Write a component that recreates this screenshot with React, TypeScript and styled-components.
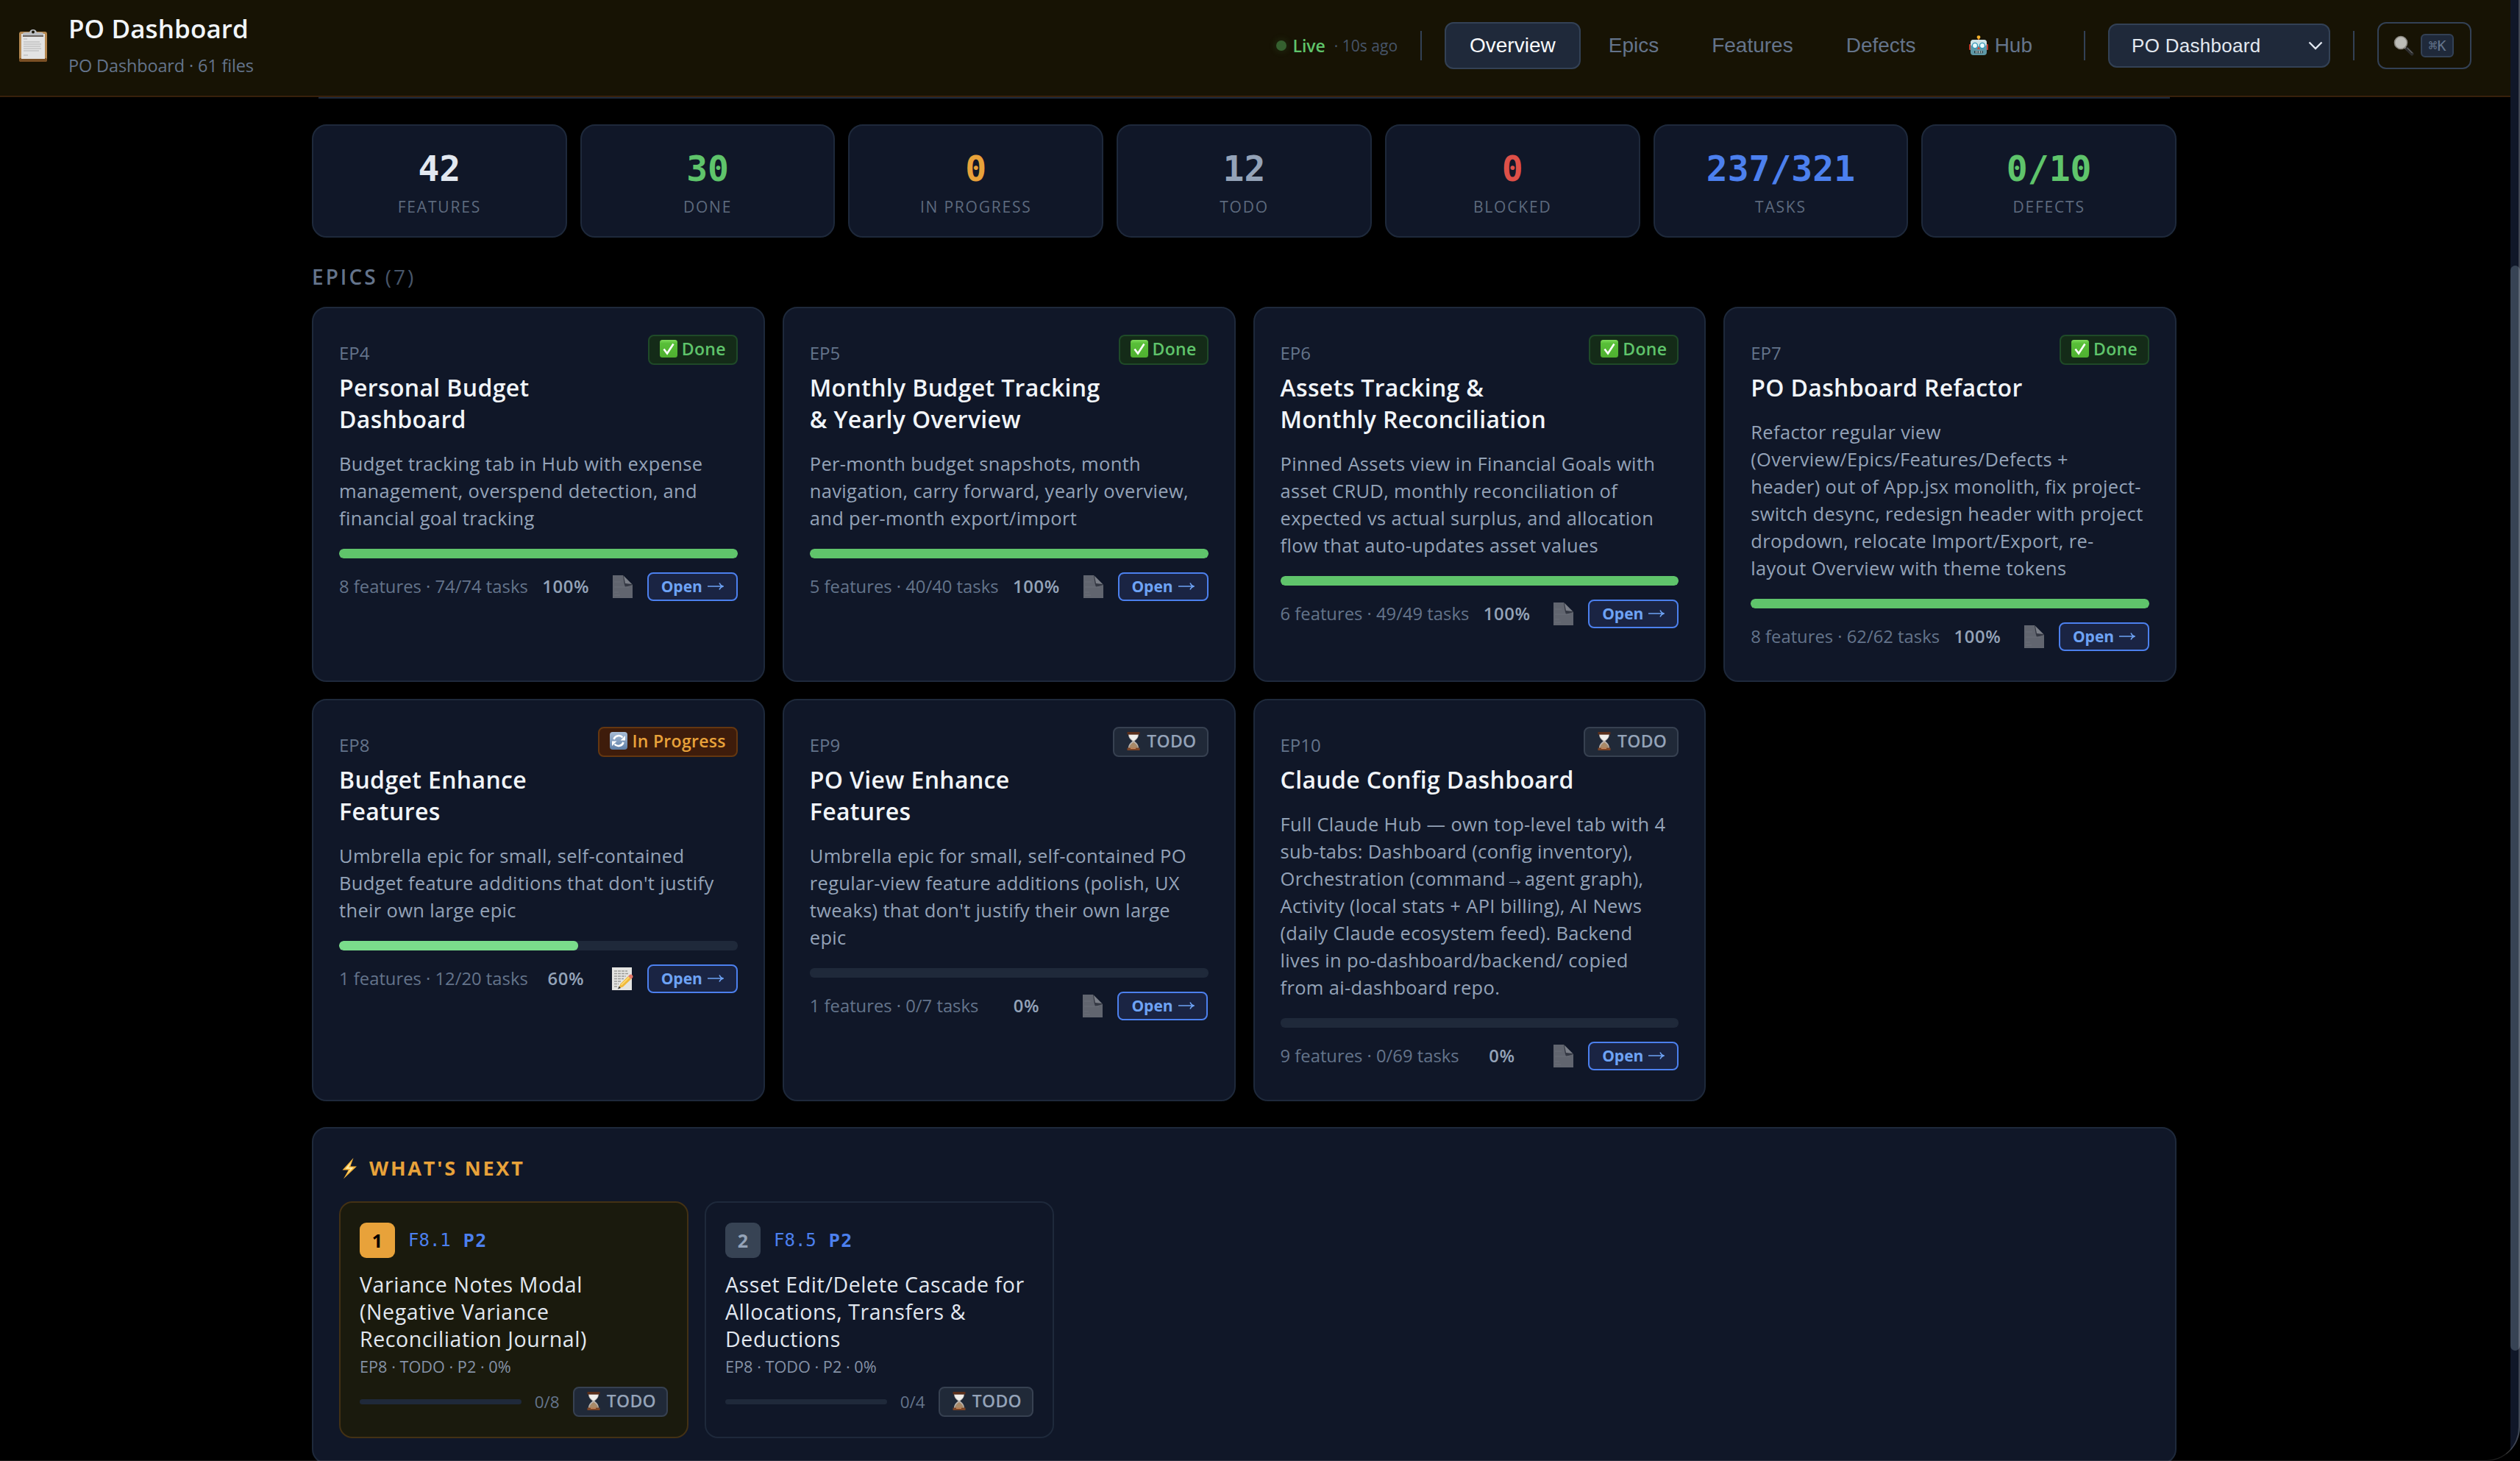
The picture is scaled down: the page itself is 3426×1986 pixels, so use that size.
import React from 'react';
import styled, { createGlobalStyle, css } from 'styled-components';

const GlobalStyle = createGlobalStyle`
  * {
    box-sizing: border-box;
  }
  html, body {
    margin: 0;
    background: #000;
  }
  body {
    font-family: 'Open Sans', 'Noto Sans', sans-serif;
    color: #f1f5f9;
    overflow: hidden;
  }
`

const MONO = `'DejaVu Sans Mono', 'Liberation Mono', monospace`;
const UI = `'Liberation Sans', Arial, sans-serif`;

const Page = styled.div`
  display: flex;
  height: 1986px;
  overflow: hidden;
  position: relative;
`
const Main = styled.main`
  flex: 1;
  min-width: 0;
`
const Track = styled.div`
  width: 13px;
  padding-top: 361px;
  background: #101728;
`
const Thumb = styled.div`
  height: 1475px;
  border-radius: 7px;
  background: #374354;
`
// thin outline of the window, drawn over the page corner
const WindowEdge = styled.div`
  position: absolute;
  inset: 0;
  pointer-events: none;
  border-right: 2px solid rgba(255, 255, 255, 0.2);
  border-bottom: 1px solid rgba(255, 255, 255, 0.12);
  border-bottom-right-radius: 46px;
  box-shadow: 0 0 0 40px #000;
`

const Header = styled.header`
  display: flex;
  align-items: center;
  justify-content: space-between;
  height: 132px;
  padding: 0 53px 6px 22px;
  background: #171304;
  border-bottom: 2px solid #38200b;
`
const Brand = styled.div`
  display: flex;
  align-items: center;
  gap: 25px;
`
const BrandTitle = styled.div`
  font-size: 35px;
  font-weight: 600;
  line-height: 44px;
  letter-spacing: 0.1px;
  white-space: nowrap;
`
const BrandSub = styled.div`
  margin-top: 10px;
  font-size: 23.5px;
  line-height: 36px;
  letter-spacing: -0.15px;
  color: #64748b;
  white-space: nowrap;
`
const Tools = styled.div`
  display: flex;
  align-items: center;
  gap: 31px;
`
const Live = styled.div`
  display: flex;
  align-items: center;
  font-size: 23px;
  font-weight: 600;
  color: #5fc46b;
  white-space: nowrap;
`
const LiveDot = styled.span`
  width: 14px;
  height: 14px;
  margin-right: 8px;
  border-radius: 50%;
  background: #35602f;
  box-shadow: 0 0 12px rgba(95, 196, 107, 0.2);
`
const Ago = styled.span`
  margin-left: 12px;
  font-size: 21px;
  font-weight: 400;
  color: #475569;
`
const Divider = styled.div`
  width: 2px;
  height: 40px;
  background: #334155;
`
const Nav = styled.nav`
  display: flex;
  gap: 4px;
  padding-right: 5px;
`
const Tab = styled.button<{ $active?: boolean }>`
  display: flex;
  align-items: center;
  gap: 9px;
  height: 64px;
  padding: 0 32px;
  border: 2px solid ${p => (p.$active ? '#334155' : 'transparent')};
  border-radius: 12px;
  background: ${p => (p.$active ? '#1f293a' : 'transparent')};
  color: ${p => (p.$active ? '#f8fafc' : '#64748b')};
  font-family: ${UI};
  font-size: 28px;
  white-space: nowrap;
`
const ProjectSelect = styled.div`
  display: flex;
  align-items: center;
  justify-content: space-between;
  width: 302px;
  height: 60px;
  padding: 0 8px 0 30px;
  border: 2px solid #334155;
  border-radius: 12px;
  background: #1f293a;
  color: #e2e8f0;
  font-family: ${UI};
  font-size: 26px;
  letter-spacing: 0.3px;
`
const SearchButton = styled.button`
  display: flex;
  align-items: center;
  gap: 9px;
  width: 128px;
  height: 64px;
  padding: 0 0 0 20px;
  border: 2px solid #334155;
  border-radius: 12px;
  background: transparent;
`
const Kbd = styled.kbd`
  display: flex;
  align-items: center;
  justify-content: center;
  width: 45px;
  height: 32px;
  border: 2px solid #334155;
  border-radius: 6px;
  background: #1f293a;
  color: #64748b;
  font-family: ${MONO};
  font-size: 20px;
`

const Content = styled.div`
  width: 2959px;
  padding-left: 424px;
`
// bottom edge of the card that has scrolled under the header
const ScrolledCard = styled.div`
  height: 2px;
  margin: 0 9px 35px;
  background: #1e293b;
`

const Stats = styled.div`
  display: grid;
  grid-template-columns: repeat(7, 1fr);
  gap: 18px;
`
const panel = css`
  background: #101728;
  border: 2px solid #1e293b;
  border-radius: 20px;
`
const Stat = styled.div`
  ${panel}
  height: 154px;
  padding-top: 30px;
  text-align: center;
`
const StatValue = styled.div<{ $color: string }>`
  font-family: ${MONO};
  font-size: 48px;
  font-weight: 700;
  line-height: 56px;
  color: ${p => p.$color};
`
const StatLabel = styled.div`
  margin-top: 9px;
  font-size: 21px;
  line-height: 30px;
  letter-spacing: 1.8px;
  color: #5d6a7e;
`

const SectionTitle = styled.h2`
  margin: 34px 0 22px;
  font-size: 28px;
  font-weight: 600;
  line-height: 38px;
  letter-spacing: 3px;
  color: #64748b;

  span {
    font-weight: 400;
    color: #475569;
  }
`

const EpicGrid = styled.div`
  display: grid;
  grid-template-columns: repeat(4, 1fr);
  gap: 23px 24px;
`
const EpicCard = styled.article`
  ${panel}
  padding: 36px 35px;
`
const EpicTop = styled.div`
  display: flex;
  align-items: flex-start;
  justify-content: space-between;
`
const EpicId = styled.div`
  padding-top: 7px;
  font-size: 24px;
  line-height: 36px;
  color: #64748b;
`
const EpicName = styled.h3`
  width: 0;
  margin: 7px 0 0;
  font-size: 32px;
  font-weight: 600;
  line-height: 43px;
  letter-spacing: 0.35px;
  white-space: pre;
`
const EpicText = styled.p`
  margin: 21px 0 23px;
  font-size: 25.5px;
  line-height: 37px;
  letter-spacing: 0.33px;
  color: #94a3b8;
  white-space: pre;
`
const Bar = styled.div<{ $thin?: boolean }>`
  flex: ${p => (p.$thin ? 1 : 'none')};
  height: ${p => (p.$thin ? 7 : 13)}px;
  border-radius: 6px;
  background: #1f293a;
  overflow: hidden;
`
const BarFill = styled.div<{ $full: boolean }>`
  height: 100%;
  border-radius: 6px;
  background: ${p => (p.$full ? '#5fc46b' : '#7adc8b')};
`
const EpicFoot = styled.div`
  display: flex;
  align-items: center;
  justify-content: space-between;
  height: 48px;
  margin-top: 14px;
  font-size: 23.8px;
  color: #64748b;
  white-space: nowrap;

  b {
    font-weight: 600;
    letter-spacing: 0.6px;
    color: #94a3b8;
  }
`
const Actions = styled.div`
  display: flex;
  align-items: center;
  gap: 8px;
`
const NoteButton = styled.button`
  display: flex;
  align-items: center;
  justify-content: center;
  width: 51px;
  height: 48px;
  padding: 0;
  border: 0;
  background: transparent;
`
const OpenButton = styled.button`
  display: flex;
  align-items: center;
  justify-content: center;
  gap: 7px;
  width: 123px;
  height: 39px;
  padding: 0 0 1px;
  border: 2px solid #4c80ee;
  border-radius: 8px;
  background: #1a2443;
  color: #6ea3f5;
  font-family: 'Open Sans', sans-serif;
  font-size: 21px;
  font-weight: 700;
`

type Status = 'done' | 'progress' | 'todo';

const badgeColors = {
  done: ['#142b18', '#1f4a28', '#5fc46b'],
  progress: ['#3e1c0b', '#653710', '#e8a23a'],
  todo: ['#202938', '#374151', '#94a3b8'],
};

const BadgeBox = styled.span<{ $status: Status }>`
  display: flex;
  flex: none;
  align-items: center;
  gap: 6px;
  height: 41px;
  padding: 0 14px 3px;
  border: 2px solid ${p => badgeColors[p.$status][1]};
  border-radius: 8px;
  background: ${p => badgeColors[p.$status][0]};
  color: ${p => badgeColors[p.$status][2]};
  font-size: 23px;
  font-weight: 600;
  letter-spacing: 0.3px;
  white-space: nowrap;
`

const NextPanel = styled.section`
  ${panel}
  margin-top: 35px;
  padding: 35px 35px 33px;
`
const NextTitle = styled.h2`
  display: flex;
  align-items: center;
  gap: 13px;
  margin: 0 0 26px;
  font-size: 27px;
  font-weight: 700;
  line-height: 38px;
  letter-spacing: 2.8px;
  color: #e8a23a;
`
const NextList = styled.div`
  display: flex;
  gap: 22px;
`
const NextCard = styled.article<{ $first: boolean }>`
  width: 475px;
  padding: 27px 26px;
  border: 2px solid ${p => (p.$first ? '#433114' : '#1e293b')};
  border-radius: 18px;
  background: ${p => (p.$first ? '#1a1a0d' : 'transparent')};
`
const NextHead = styled.div`
  display: flex;
  align-items: center;
  font-family: ${MONO};
  font-size: 24px;
  color: #4c80ee;

  b {
    margin-left: 17px;
    font-size: 25px;
    letter-spacing: 1.5px;
  }
`
const Rank = styled.span<{ $first: boolean }>`
  display: flex;
  align-items: center;
  justify-content: center;
  width: 48px;
  height: 48px;
  margin-right: 18px;
  border-radius: 9px;
  background: ${p => (p.$first ? '#e8a23a' : '#374354')};
  color: ${p => (p.$first ? '#000' : '#94a3b8')};
  font-family: 'Open Sans', sans-serif;
  font-size: 25px;
  font-weight: 700;
`
const NextName = styled.h3`
  margin: 18px 0 0;
  font-size: 28.5px;
  font-weight: 500;
  line-height: 37px;
  letter-spacing: 0.6px;
  color: #e2e8f0;
  white-space: pre;
`
const NextMeta = styled.div`
  margin-top: 4px;
  font-size: 21.7px;
  line-height: 30px;
  color: #8592a6;
`
const NextFoot = styled.div`
  display: flex;
  align-items: center;
  gap: 18px;
  margin-top: 12px;
  font-size: 22.5px;
  color: #64748b;
`

const ClipboardIcon = () => (
  <svg width="46" height="46" viewBox="0 0 46 46">
    <rect x="4" y="4" width="38" height="41" rx="3" fill="#b58850" />
    <rect x="4" y="40" width="38" height="5" rx="2" fill="#7a4f24" />
    <rect x="7" y="7" width="32" height="34" fill="#e3e3e3" />
    <path d="M10 14h5M10 18h22M10 21h24M10 24h23M10 27h24M10 30h21M10 36h6" stroke="#c4c4c4" strokeWidth="1.6" />
    <path d="M9 10V7q0-2 3-2h6q1-4 5-4t5 4h6q3 0 3 2v3z" fill="#b9bcc0" />
    <path d="M9 9h28v2H9z" fill="#6b6460" />
    <circle cx="23" cy="4.5" r="2" fill="#171304" />
  </svg>
);

const RobotIcon = () => (
  <svg width="26" height="28" viewBox="0 0 26 28">
    <path d="M12 3h2v5h-2z" fill="#b35a1f" />
    <circle cx="13" cy="2.6" r="2.4" fill="#f5b32c" />
    <rect x="0" y="12" width="3" height="8" rx="1" fill="#c0392b" />
    <rect x="23" y="12" width="3" height="8" rx="1" fill="#c0392b" />
    <rect x="2" y="6" width="22" height="21" rx="4" fill="#5e98a6" />
    <rect x="2" y="6" width="22" height="9" rx="4" fill="#cfe3e6" />
    <circle cx="8" cy="14" r="3.6" fill="#e9fbff" stroke="#3497b5" strokeWidth="1.4" />
    <circle cx="18" cy="14" r="3.6" fill="#e9fbff" stroke="#3497b5" strokeWidth="1.4" />
    <path d="M13 15l2 4h-4z" fill="#d4493a" />
    <rect x="7" y="21" width="12" height="3.4" rx="1" fill="#24434b" />
    <path d="M9.5 21v3.4M12 21v3.4M14.5 21v3.4M17 21v3.4" stroke="#dfe9ea" strokeWidth="1" />
  </svg>
);

const SearchIcon = () => (
  <svg width="28" height="28" viewBox="0 0 28 28">
    <path d="M15 16l4 4" stroke="#8b8b8b" strokeWidth="3" />
    <path d="M18.5 18.5l6.500 6.500" stroke="#2b2b2b" strokeWidth="5" strokeLinecap="round" />
    <path d="M19 17.500l6.500 6.500" stroke="#8d8d8d" strokeWidth="1" strokeLinecap="round" />
    <circle cx="10" cy="10" r="8.500" fill="#bdbdb8" stroke="#8a8780" strokeWidth="1.600" />
  </svg>
);

const CheckIcon = () => (
  <svg width="24" height="24" viewBox="0 0 24 24">
    <defs>
      <linearGradient id="check" x1="0" y1="0" x2="0" y2="1">
        <stop offset="0" stopColor="#7fdc5b" />
        <stop offset="0.2" stopColor="#58bf38" />
        <stop offset="1" stopColor="#4fb030" />
      </linearGradient>
    </defs>
    <rect width="24" height="24" rx="3.500" fill="url(#check)" />
    <path d="M5.500 12.500l4.500 6 8.500-13" fill="none" stroke="#fff" strokeWidth="2.600" />
  </svg>
);

const RefreshIcon = () => (
  <svg width="24" height="24" viewBox="0 0 24 24">
    <defs>
      <linearGradient id="refresh" x1="0" y1="0" x2="0" y2="1">
        <stop offset="0" stopColor="#a9bdd6" />
        <stop offset="1" stopColor="#5e7ea6" />
      </linearGradient>
    </defs>
    <rect width="24" height="24" rx="4" fill="url(#refresh)" />
    <path d="M5.500 10a7 7 0 0 1 12-2.500M18.500 14a7 7 0 0 1-12 2.500" fill="none" stroke="#fff" strokeWidth="2.600" />
    <path d="M21 5v6.500h-6.500zM3 19v-6.500h6.500z" fill="#fff" />
  </svg>
);

const HourglassIcon = () => (
  <svg width="24" height="25" viewBox="0 0 24 25">
    <path d="M5 3h14c0 5-3 7-5.500 9.500C16 15 19 17 19 22H5c0-5 3-7 5.500-9.500C8 10 5 8 5 3z" fill="#b9b4b0" />
    <path d="M6 4h12c0 3.500-2 5.500-6 8-4-2.500-6-4.500-6-8z" fill="#f1efec" />
    <path d="M12 14c3 2 5.500 4 6 7.500H6c.500-3.500 3-5.500 6-7.500z" fill="#a98a68" />
    <path d="M3.500 0h17v3.500h-17z" fill="#5b2f1b" />
    <path d="M3.500 21.500h17V25h-17z" fill="#7b4426" />
    <path d="M8 21.500h7V23H8z" fill="#c98a5c" />
  </svg>
);

const PageIcon = () => (
  <svg width="27" height="31" viewBox="0 0 27 31">
    <path d="M0 0h14l13 13v18H0z" fill="#61656f" />
    <path d="M14 0l13 13-10 3c-2-5-2-10-3-16z" fill="#343843" />
    <path d="M15 1l11 11-9-1z" fill="#7b7f88" />
    <path d="M2 9h9M2 16h20M2 23h6M2 27h8" stroke="#6d717a" strokeWidth="1" />
  </svg>
);

const MemoIcon = () => (
  <svg width="29" height="31" viewBox="0 0 29 31">
    <path d="M0 0h27v31H0z" fill="#e4e4e2" />
    <path d="M3 5h18M3 8.500h19M3 12h16M3 15.500h13M3 19h9M3 22.500h6M3 26h5" stroke="#9a9a98" strokeWidth="1.400" strokeDasharray="4 1" />
    <path d="M9 28.500l2.500-6L22 12l4 4-11 10.500z" fill="#f0b93a" />
    <path d="M12.500 24L23.500 13.200" stroke="#ffdf7a" strokeWidth="1.500" />
    <path d="M22 12l2-2q2-1 3.600.6T28 14l-2 2z" fill="#e4796b" />
    <path d="M8 29.500l1.600-4 2.400 2.400z" fill="#3b3b3b" />
  </svg>
);

const BoltIcon = () => (
  <svg width="28" height="30" viewBox="0 0 28 30">
    <path d="M19.500 1L4.500 17.500h8.200L6 29.500 24 12.500h-8.600z" fill="#f6b53c" />
    <path d="M16.500 6.500L8.500 15.700h7.200L10.800 23 19.500 14h-6.800z" fill="#fff0b0" />
  </svg>
);

const Chevron = () => (
  <svg width="20" height="12" viewBox="0 0 20 12">
    <path d="M1.500 1.500L10 10l8.500-8.500" fill="none" stroke="#e2e8f0" strokeWidth="2.400" />
  </svg>
);

const Arrow = () => (
  <svg width="22" height="12" viewBox="0 0 22 12">
    <path d="M0 6h20.500M16 1.500q1.500 3.500 5 4.500-3.500 1-5 4.500" fill="none" stroke="#6ea3f5" strokeWidth="1.500" />
  </svg>
);

const badges = {
  done: { icon: <CheckIcon />, label: 'Done' },
  progress: { icon: <RefreshIcon />, label: 'In Progress' },
  todo: { icon: <HourglassIcon />, label: 'TODO' },
};

const Badge: React.FC<{ status: Status }> = ({ status }) => (
  <BadgeBox $status={status}>
    {badges[status].icon}
    {badges[status].label}
  </BadgeBox>
);

const stats = [
  { value: '42', label: 'FEATURES', color: '#e2e8f0' },
  { value: '30', label: 'DONE', color: '#5fc46b' },
  { value: '0', label: 'IN PROGRESS', color: '#e8a23a' },
  { value: '12', label: 'TODO', color: '#94a3b8' },
  { value: '0', label: 'BLOCKED', color: '#de5048' },
  { value: '237/321', label: 'TASKS', color: '#4c80ee' },
  { value: '0/10', label: 'DEFECTS', color: '#5fc46b' },
];

type Epic = {
  id: string;
  name: string;
  text: string;
  status: Status;
  features: number;
  tasks: string;
  percent: number;
  note?: boolean;
}

const epics: Epic[] = [
  {
    id: 'EP4',
    name: 'Personal Budget\nDashboard',
    text: 'Budget tracking tab in Hub with expense\nmanagement, overspend detection, and\nfinancial goal tracking',
    status: 'done', features: 8, tasks: '74/74', percent: 100,
  },
  {
    id: 'EP5',
    name: 'Monthly Budget Tracking\n& Yearly Overview',
    text: 'Per-month budget snapshots, month\nnavigation, carry forward, yearly overview,\nand per-month export/import',
    status: 'done', features: 5, tasks: '40/40', percent: 100,
  },
  {
    id: 'EP6',
    name: 'Assets Tracking &\nMonthly Reconciliation',
    text: 'Pinned Assets view in Financial Goals with\nasset CRUD, monthly reconciliation of\nexpected vs actual surplus, and allocation\nflow that auto-updates asset values',
    status: 'done', features: 6, tasks: '49/49', percent: 100,
  },
  {
    id: 'EP7',
    name: 'PO Dashboard Refactor',
    text: 'Refactor regular view\n(Overview/Epics/Features/Defects +\nheader) out of App.jsx monolith, fix project-\nswitch desync, redesign header with project\ndropdown, relocate Import/Export, re-\nlayout Overview with theme tokens',
    status: 'done', features: 8, tasks: '62/62', percent: 100,
  },
  {
    id: 'EP8',
    name: 'Budget Enhance\nFeatures',
    text: 'Umbrella epic for small, self-contained\nBudget feature additions that don\'t justify\ntheir own large epic',
    status: 'progress', features: 1, tasks: '12/20', percent: 60, note: true,
  },
  {
    id: 'EP9',
    name: 'PO View Enhance\nFeatures',
    text: 'Umbrella epic for small, self-contained PO\nregular-view feature additions (polish, UX\ntweaks) that don\'t justify their own large\nepic',
    status: 'todo', features: 1, tasks: '0/7', percent: 0,
  },
  {
    id: 'EP10',
    name: 'Claude Config Dashboard',
    text: 'Full Claude Hub — own top-level tab with 4\nsub-tabs: Dashboard (config inventory),\nOrchestration (command→agent graph),\nActivity (local stats + API billing), AI News\n(daily Claude ecosystem feed). Backend\nlives in po-dashboard/backend/ copied\nfrom ai-dashboard repo.',
    status: 'todo', features: 9, tasks: '0/69', percent: 0,
  },
];

const nextItems = [
  { id: 'F8.1', name: 'Variance Notes Modal\n(Negative Variance\nReconciliation Journal)', count: '0/8' },
  { id: 'F8.5', name: 'Asset Edit/Delete Cascade for\nAllocations, Transfers &\nDeductions', count: '0/4' },
];

const App: React.FC = () => {
  return (
    <React.Fragment>
      <GlobalStyle />
      <Page>
        <Main>
          <Header>
            <Brand>
              <ClipboardIcon />
              <div>
                <BrandTitle>PO Dashboard</BrandTitle>
                <BrandSub>PO Dashboard · 61 files</BrandSub>
              </div>
            </Brand>
            <Tools>
              <Live>
                <LiveDot />
                Live
                <Ago>· 10s ago</Ago>
              </Live>
              <Divider />
              <Nav>
                <Tab $active>Overview</Tab>
                <Tab>Epics</Tab>
                <Tab>Features</Tab>
                <Tab>Defects</Tab>
                <Tab><RobotIcon />Hub</Tab>
              </Nav>
              <Divider />
              <ProjectSelect>
                PO Dashboard
                <Chevron />
              </ProjectSelect>
              <Divider />
              <SearchButton>
                <SearchIcon />
                <Kbd>⌘K</Kbd>
              </SearchButton>
            </Tools>
          </Header>
          <Content>
            <ScrolledCard />
            <Stats>
              {stats.map((stat) => (
                <Stat key={stat.label}>
                  <StatValue $color={stat.color}>{stat.value}</StatValue>
                  <StatLabel>{stat.label}</StatLabel>
                </Stat>
              ))}
            </Stats>
            <SectionTitle>EPICS <span>(7)</span></SectionTitle>
            <EpicGrid>
              {epics.map((epic) => (
                <EpicCard key={epic.id}>
                  <EpicTop>
                    <div>
                      <EpicId>{epic.id}</EpicId>
                      <EpicName>{epic.name}</EpicName>
                    </div>
                    <Badge status={epic.status} />
                  </EpicTop>
                  <EpicText>{epic.text}</EpicText>
                  <Bar>
                    <BarFill $full={epic.percent === 100} style={{ width: `${epic.percent}%` }} />
                  </Bar>
                  <EpicFoot>
                    <span>{epic.features} features · {epic.tasks} tasks</span>
                    <b>{epic.percent}%</b>
                    <Actions>
                      <NoteButton>{epic.note ? <MemoIcon /> : <PageIcon />}</NoteButton>
                      <OpenButton>Open <Arrow /></OpenButton>
                    </Actions>
                  </EpicFoot>
                </EpicCard>
              ))}
            </EpicGrid>
            <NextPanel>
              <NextTitle><BoltIcon />WHAT'S NEXT</NextTitle>
              <NextList>
                {nextItems.map((item, index) => (
                  <NextCard key={item.id} $first={index === 0}>
                    <NextHead>
                      <Rank $first={index === 0}>{index + 1}</Rank>
                      {item.id}
                      <b>P2</b>
                    </NextHead>
                    <NextName>{item.name}</NextName>
                    <NextMeta>EP8 · TODO · P2 · 0%</NextMeta>
                    <NextFoot>
                      <Bar $thin />
                      {item.count}
                      <Badge status="todo" />
                    </NextFoot>
                  </NextCard>
                ))}
              </NextList>
            </NextPanel>
          </Content>
        </Main>
        <Track>
          <Thumb />
        </Track>
        <WindowEdge />
      </Page>
    </React.Fragment>
  );
}

export default App;
